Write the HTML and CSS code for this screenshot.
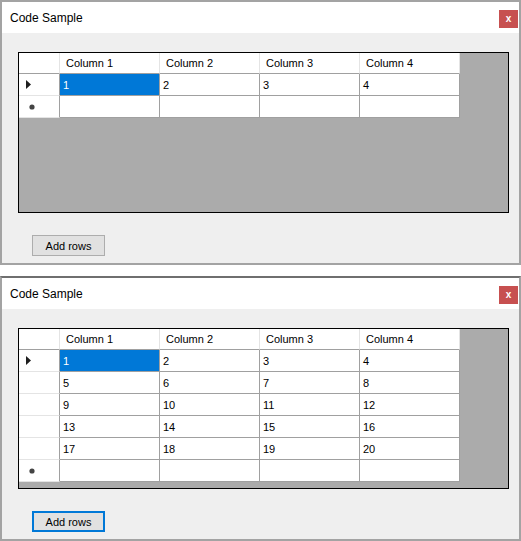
FILE: index.html
```html
<!DOCTYPE html>
<html>
<head>
<meta charset="utf-8">
<link rel="stylesheet" href="styles.css">
</head>
<body>
<div class="win">
  <div class="titlebar"><span class="title">Code Sample</span><span class="close">x</span></div>
  <div class="body">
    <div class="grid">
      <div class="row head"><div class="rh"></div><div class="ch">Column 1</div><div class="ch">Column 2</div><div class="ch">Column 3</div><div class="ch">Column 4</div></div>
      <div class="row"><div class="rh"><svg class="arrow" width="6" height="9" viewBox="0 0 6 9"><polygon points="0,0 5,4.5 0,9" fill="#1e1e1e"/></svg></div><div class="c sel">1</div><div class="c">2</div><div class="c">3</div><div class="c">4</div></div>
      <div class="row"><div class="rh"><svg class="star" width="6" height="6" viewBox="0 0 6 6"><circle cx="3" cy="3" r="2.6" fill="#444444"/></svg></div><div class="c"></div><div class="c"></div><div class="c"></div><div class="c"></div></div>
    </div>
    <button class="btn">Add rows</button>
  </div>
</div>
<div class="win active">
  <div class="titlebar"><span class="title">Code Sample</span><span class="close">x</span></div>
  <div class="body">
    <div class="grid">
      <div class="row head"><div class="rh"></div><div class="ch">Column 1</div><div class="ch">Column 2</div><div class="ch">Column 3</div><div class="ch">Column 4</div></div>
      <div class="row"><div class="rh"><svg class="arrow" width="6" height="9" viewBox="0 0 6 9"><polygon points="0,0 5,4.5 0,9" fill="#1e1e1e"/></svg></div><div class="c sel">1</div><div class="c">2</div><div class="c">3</div><div class="c">4</div></div>
      <div class="row"><div class="rh"></div><div class="c">5</div><div class="c">6</div><div class="c">7</div><div class="c">8</div></div>
      <div class="row"><div class="rh"></div><div class="c">9</div><div class="c">10</div><div class="c">11</div><div class="c">12</div></div>
      <div class="row"><div class="rh"></div><div class="c">13</div><div class="c">14</div><div class="c">15</div><div class="c">16</div></div>
      <div class="row"><div class="rh"></div><div class="c">17</div><div class="c">18</div><div class="c">19</div><div class="c">20</div></div>
      <div class="row"><div class="rh"><svg class="star" width="6" height="6" viewBox="0 0 6 6"><circle cx="3" cy="3" r="2.6" fill="#444444"/></svg></div><div class="c"></div><div class="c"></div><div class="c"></div><div class="c"></div></div>
    </div>
    <button class="btn focus">Add rows</button>
  </div>
</div>
</body>
</html>
```

FILE: styles.css
```css
* { box-sizing: border-box; }
body {
  margin: 0;
  background: #ffffff;
  font-family: "Liberation Sans", Arial, sans-serif;
  display: flex;
  flex-direction: column;
  gap: 11px;
}
.win {
  width: 521px;
  height: 265px;
  border: 2px solid #a3a3a3;
  background: #efefef;
  display: flex;
  flex-direction: column;
}
.win.active { border-top-color: #6f6f6f; }
.titlebar {
  height: 31px;
  flex: none;
  background: #ffffff;
  display: flex;
  align-items: center;
  justify-content: space-between;
  padding-left: 8px;
}
.title {
  font-size: 12px;
  color: #000;
}
.close {
  width: 19px;
  height: 18px;
  margin-right: 1px;
  margin-top: 2px;
  background: #c75050;
  color: #fff;
  font-weight: bold;
  font-size: 10px;
  display: flex;
  align-items: center;
  justify-content: center;
}
.body {
  padding: 19px 0 0 16px;
  display: flex;
  flex-direction: column;
  align-items: flex-start;
}
.grid {
  width: 491px;
  height: 161px;
  border: 1px solid #000;
  background: #ababab;
}
.row { display: flex; }
.rh {
  width: 41px;
  height: 22px;
  background: #fff;
  border-right: 1px solid #a0a0a0;
  border-bottom: 1px solid #e4e4e4;
  display: flex;
  align-items: center;
  padding-left: 7px;
}
.head .rh {
  height: 21px;
  border-right-color: #e4e4e4;
  border-bottom-color: #a0a0a0;
}
.ch {
  width: 100px;
  height: 21px;
  background: #fff;
  border-right: 1px solid #e4e4e4;
  border-bottom: 1px solid #a0a0a0;
  padding-left: 6px;
  font-size: 11px;
  color: #000;
  display: flex;
  align-items: center;
}
.c {
  width: 100px;
  height: 22px;
  background: #fff;
  border-right: 1px solid #a0a0a0;
  border-bottom: 1px solid #a0a0a0;
  padding-left: 3px;
  font-size: 11px;
  color: #000;
  display: flex;
  align-items: center;
}
.c.sel {
  background: #0078d7;
  color: #fff;
}
.star { margin-left: 3px; }
.btn {
  margin-top: 22px;
  margin-left: 14px;
  width: 73px;
  height: 21px;
  background: #e1e1e1;
  border: 1px solid #adadad;
  font-family: "Liberation Sans", Arial, sans-serif;
  font-size: 11px;
  color: #000;
  padding: 0;
}
.btn.focus { border: 2px solid #0078d7; }
```
